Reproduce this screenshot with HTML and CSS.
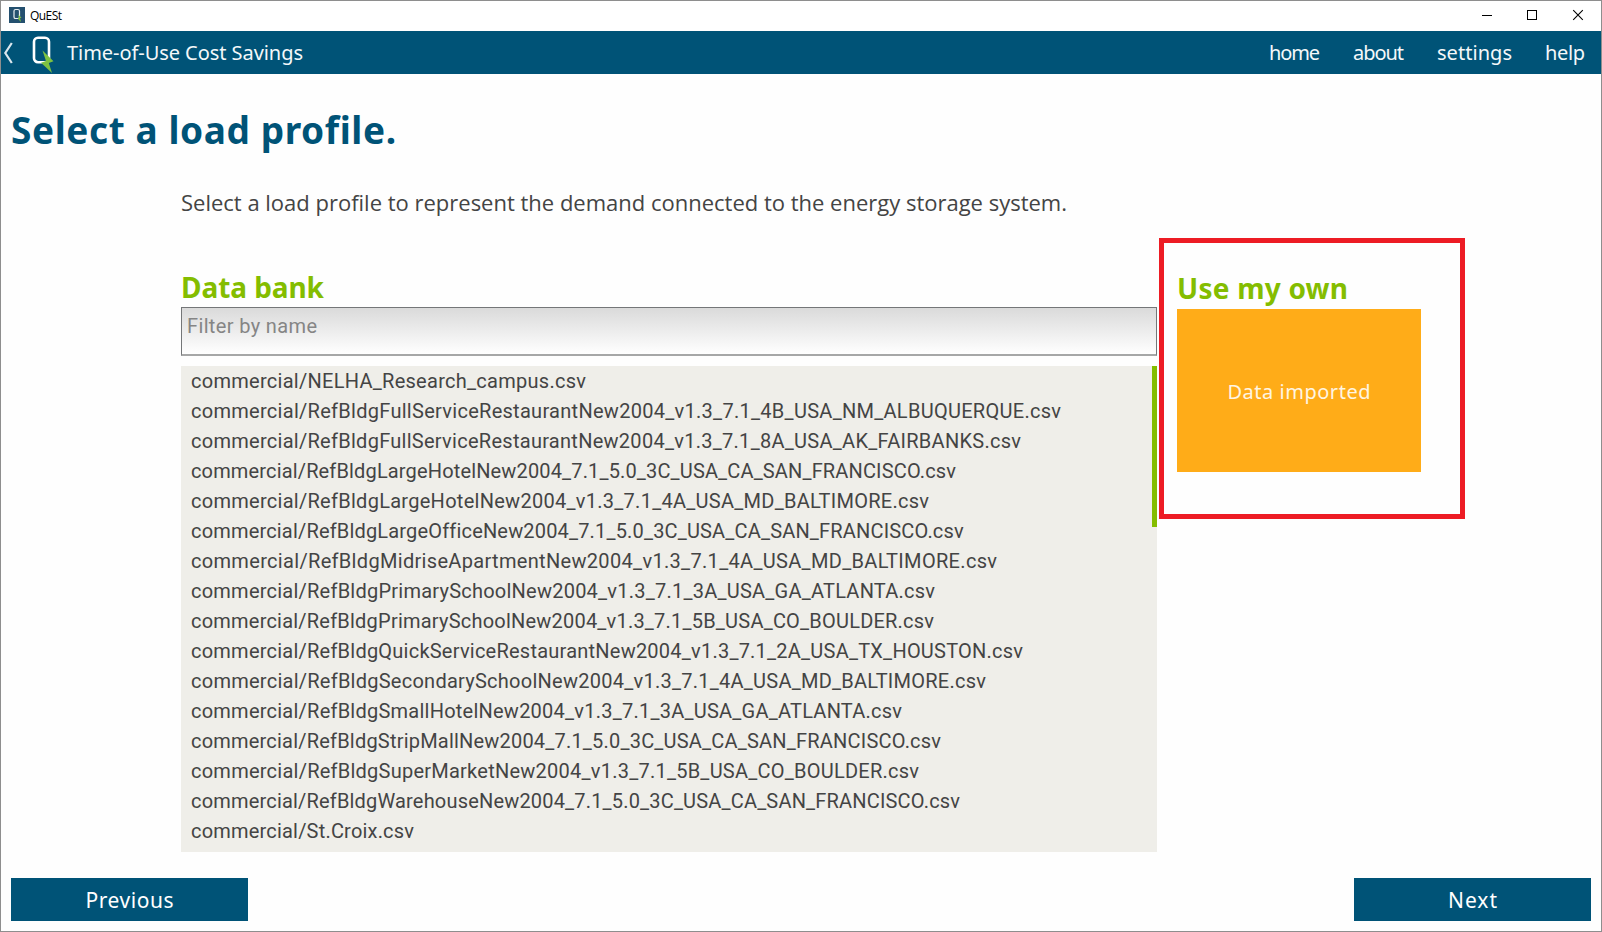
FILE: index.html
```html
<!DOCTYPE html>
<html lang="en">
<head>
<meta charset="utf-8">
<title>QuESt</title>
<link rel="stylesheet" href="styles.css">
</head>
<body>
<div class="window">
  <header class="titlebar">
    <svg class="app-icon" viewBox="0 0 16 16"><rect width="16" height="16" fill="#24506f"/><rect x="5" y="2.5" width="5.5" height="9" rx="1.6" fill="none" stroke="#e8eef2" stroke-width="1.2"/><path d="M9.2 7.5 12.500 10.800 11 11.200 12 15 8.600 11.600 10.200 11.100Z" fill="#7dc242"/></svg>
    <span class="app-name" data-width="32">QuESt</span>
    <svg class="window-controls" viewBox="0 0 112 12" shape-rendering="crispEdges"><path d="M0 6.500h10M45.500 1.500h9v9h-9z" fill="none" stroke="#000"/><path d="M91.200 1.200l9.600 9.600M100.800 1.200l-9.600 9.600" stroke="#000" stroke-width="1.100" shape-rendering="auto"/></svg>
  </header>
  <nav class="navbar">
    <svg class="back" viewBox="0 0 10 22"><path d="M8.800 1 2.300 11 8.800 21" fill="none" stroke="#dbe7ee" stroke-width="2.200"/></svg>
    <svg class="logo" viewBox="0 0 22 37"><rect x="2" y="1.700" width="15" height="24.500" rx="4" fill="none" stroke="#fff" stroke-width="2.600"/><path d="M10.500 14.500 21.500 25.300 16.800 27 20 37 9 26.800 14 25.100Z" fill="#7dc242"/></svg>
    <span class="nav-title"><span data-width="236">Time-of-Use Cost Savings</span></span>
    <a class="nav-link"><span data-width="51">home</span></a>
    <a class="nav-link"><span data-width="51">about</span></a>
    <a class="nav-link"><span data-width="75">settings</span></a>
    <a class="nav-link"><span data-width="40">help</span></a>
  </nav>
  <main class="page">
    <h1 class="heading"><span data-width="385">Select a load profile.</span></h1>
    <p class="intro"><span data-width="886">Select a load profile to represent the demand connected to the energy storage system.</span></p>
    <div class="columns">
      <section class="bank">
        <h2 class="subheading"><span data-width="143">Data bank</span></h2>
        <div class="filter"><span data-width="130">Filter by name</span></div>
        <div class="list">
          <ul class="rows">
            <li><span data-width="395">commercial/NELHA_Research_campus.csv</span></li>
            <li><span data-width="870">commercial/RefBldgFullServiceRestaurantNew2004_v1.3_7.1_4B_USA_NM_ALBUQUERQUE.csv</span></li>
            <li><span data-width="830">commercial/RefBldgFullServiceRestaurantNew2004_v1.3_7.1_8A_USA_AK_FAIRBANKS.csv</span></li>
            <li><span data-width="765">commercial/RefBldgLargeHotelNew2004_7.1_5.0_3C_USA_CA_SAN_FRANCISCO.csv</span></li>
            <li><span data-width="738">commercial/RefBldgLargeHotelNew2004_v1.3_7.1_4A_USA_MD_BALTIMORE.csv</span></li>
            <li><span data-width="771">commercial/RefBldgLargeOfficeNew2004_7.1_5.0_3C_USA_CA_SAN_FRANCISCO.csv</span></li>
            <li><span data-width="806">commercial/RefBldgMidriseApartmentNew2004_v1.3_7.1_4A_USA_MD_BALTIMORE.csv</span></li>
            <li><span data-width="744">commercial/RefBldgPrimarySchoolNew2004_v1.3_7.1_3A_USA_GA_ATLANTA.csv</span></li>
            <li><span data-width="743">commercial/RefBldgPrimarySchoolNew2004_v1.3_7.1_5B_USA_CO_BOULDER.csv</span></li>
            <li><span data-width="832">commercial/RefBldgQuickServiceRestaurantNew2004_v1.3_7.1_2A_USA_TX_HOUSTON.csv</span></li>
            <li><span data-width="795">commercial/RefBldgSecondarySchoolNew2004_v1.3_7.1_4A_USA_MD_BALTIMORE.csv</span></li>
            <li><span data-width="711">commercial/RefBldgSmallHotelNew2004_v1.3_7.1_3A_USA_GA_ATLANTA.csv</span></li>
            <li><span data-width="750">commercial/RefBldgStripMallNew2004_7.1_5.0_3C_USA_CA_SAN_FRANCISCO.csv</span></li>
            <li><span data-width="728">commercial/RefBldgSuperMarketNew2004_v1.3_7.1_5B_USA_CO_BOULDER.csv</span></li>
            <li><span data-width="769">commercial/RefBldgWarehouseNew2004_7.1_5.0_3C_USA_CA_SAN_FRANCISCO.csv</span></li>
            <li><span data-width="223">commercial/St.Croix.csv</span></li>
          </ul>
          <div class="scrollbar"></div>
        </div>
      </section>
      <section class="own">
        <h2 class="subheading"><span data-width="171">Use my own</span></h2>
        <button class="import"><span data-width="143">Data imported</span></button>
      </section>
    </div>
    <footer class="actions">
      <button class="step"><span data-width="88">Previous</span></button>
      <button class="step"><span data-width="49">Next</span></button>
    </footer>
  </main>
</div>
<script src="labels.js"></script>
</body>
</html>
```
FILE: styles.css
```css
* { box-sizing: border-box; }
body { margin: 0; font-family: Roboto, "Noto Sans", sans-serif; color: #444; }
h1, h2, p, ul { margin: 0; padding: 0; }
[data-width] { display: inline-block; white-space: nowrap; }
button { border: 0; padding: 0; font-family: "Noto Sans", sans-serif; color: #fff; }

.window { width: 1602px; height: 932px; border: 1px solid #8e8e8e; background: #fefefe; display: flex; flex-direction: column; overflow: hidden; }

.titlebar { height: 30px; flex: none; display: flex; align-items: center; padding-left: 8px; background: #fff; color: #000; }
.app-icon { width: 16px; height: 16px; margin: 0 5px 2px 0; }
.app-name { font: 12px/28px "Open Sans", sans-serif; margin-bottom: 1px; }
.window-controls { width: 112px; height: 12px; margin: 0 7px 2px auto; }

.navbar { height: 43px; flex: none; display: flex; align-items: center; background: #005377; color: #f4f8fa; font-family: "Noto Sans", sans-serif; font-size: 20px; line-height: 43px; padding-right: 16px; }
.back { width: 10px; height: 22px; margin-left: 2px; }
.logo { width: 22px; height: 37px; margin: 4px 0 0 19px; }
.nav-title { margin: 0 auto 0 13px; }
.nav-link { margin: 0 0 0 33px; }

.page { flex: 1; display: flex; flex-direction: column; padding: 0 10px 10px; }
.heading { height: 106px; padding-top: 32px; font-family: "Noto Sans", sans-serif; font-size: 37px; line-height: 48px; font-weight: 700; color: #005377; }
.intro { margin-left: 170px; font: 22px/44px "Open Sans", sans-serif; height: 58px; }
.columns { flex: 1; display: flex; gap: 2px; margin-left: 170px; }
.bank { width: 976px; padding-top: 29px; }
.subheading { height: 40px; font-family: "Noto Sans", sans-serif; font-size: 28px; line-height: 40px; font-weight: 700; color: #84bd00; }
.filter { height: 49px; padding: 0 5px; border: 1px solid #747678; border-bottom: 2px solid #a6a7a7; background: linear-gradient(#dadada, #fff); color: #858585; font-size: 20px; line-height: 37px; }
.list { height: 486px; margin-top: 10px; background: #efeee9; display: flex; justify-content: space-between; }
.rows { list-style: none; padding-left: 10px; font-size: 20px; line-height: 30px; }
.rows li { height: 30px; }
.scrollbar { width: 5px; height: 161px; background: #84bd00; }
.own { width: 306px; height: 281px; border: 5px solid #ed1c24; padding: 25px 0 0 13px; }
.import { display: block; width: 244px; height: 163px; margin-top: 1px; padding-top: 1px; background: #ffac18; color: #fff5e2; font-size: 20px; }
.actions { display: flex; justify-content: space-between; }
.step { width: 237px; height: 43px; padding-top: 1px; background: #005377; font-size: 21px; line-height: 42px; }
```
FILE: labels.js
```js
// Tracks each label so that it fills its nominal width.
document.querySelectorAll("[data-width]").forEach(function (label) {
  var gaps = label.textContent.length - 1;
  var spare = Number(label.dataset.width) - label.getBoundingClientRect().width;
  label.style.letterSpacing = spare / gaps + "px";
  label.style.marginRight = -spare / gaps + "px";
});
```
